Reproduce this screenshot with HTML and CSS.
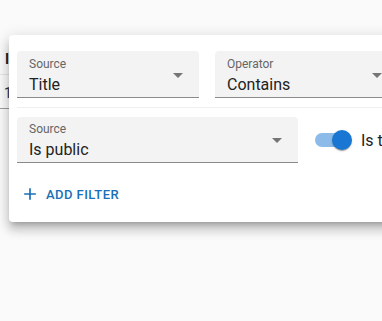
FILE: index.html
```html
<!DOCTYPE html>
<html>
<head>
<meta charset="utf-8">
<link rel="stylesheet" href="styles.css">
</head>
<body>
<div class="page">
  <div class="table">
    <div class="trow head"><span class="cell">Id</span></div>
    <div class="trow"><span class="cell">1</span></div>
  </div>

  <div class="popover">
    <div class="frow">
      <div class="field w1">
        <div class="label">Source</div>
        <div class="value">Title</div>
        <svg class="arrow" viewBox="0 0 24 24" width="24" height="24"><path d="M7 10l5 5 5-5z"/></svg>
      </div>
      <div class="field w2">
        <div class="label">Operator</div>
        <div class="value">Contains</div>
        <svg class="arrow" viewBox="0 0 24 24" width="24" height="24"><path d="M7 10l5 5 5-5z"/></svg>
      </div>
    </div>
    <div class="sep"></div>
    <div class="frow row2">
      <div class="field w3">
        <div class="label">Source</div>
        <div class="value">Is public</div>
        <svg class="arrow" viewBox="0 0 24 24" width="24" height="24"><path d="M7 10l5 5 5-5z"/></svg>
      </div>
      <div class="switchwrap">
        <span class="switch"><span class="track"></span><span class="thumb"></span></span>
        <span class="swlabel">Is true</span>
      </div>
    </div>
    <div class="actions">
      <button class="addbtn">
        <svg viewBox="0 0 24 24" width="20" height="20"><path d="M19 13h-6v6h-2v-6H5v-2h6V5h2v6h6v2z"/></svg>
        <span>Add filter</span>
      </button>
    </div>
  </div>
</div>
</body>
</html>
```
FILE: styles.css
```css
html, body {
  margin: 0;
  padding: 0;
  background: #fafafa;
  font-family: Roboto, "Liberation Sans", sans-serif;
  overflow: hidden;
}
.page {
  position: relative;
  width: 382px;
  height: 321px;
  padding-top: 41px;
  box-sizing: border-box;
  overflow: hidden;
}
.table {
  display: flex;
  flex-direction: column;
}
.trow {
  height: 34px;
  border-bottom: 1px solid #e0e0e0;
  display: flex;
  align-items: center;
  padding-left: 4px;
  font-size: 14px;
  color: #333;
}
.trow.head {
  padding-left: 5px;
  font-weight: 700;
  color: #222;
  border-bottom-color: #e6e6e6;
  align-items: flex-start;
  padding-top: 10px;
  box-sizing: border-box;
}
.trow:not(.head) {
  border-bottom-color: #9e9e9e;
  padding-top: 2px;
  box-sizing: border-box;
}
.popover {
  position: absolute;
  left: 9px;
  top: 35px;
  width: 420px;
  height: 187px;
  box-sizing: border-box;
  background: #fff;
  border-radius: 4px;
  padding: 16px 0 0 8px;
  box-shadow: 0 5px 5px -3px rgba(0,0,0,0.2), 0 8px 10px 1px rgba(0,0,0,0.14), 0 3px 14px 2px rgba(0,0,0,0.12);
  display: flex;
  flex-direction: column;
}
.frow {
  display: flex;
  gap: 16px;
  align-items: center;
}
.field {
  position: relative;
  background: #f3f3f3;
  border-radius: 4px 4px 0 0;
  border-bottom: 1px solid #8a8a8a;
  padding-left: 12px;
  box-sizing: border-box;
  height: 47px;
  flex-shrink: 0;
}
.w1 { width: 182px; }
.w2 { width: 183px; }
.w3 { width: 281px; height: 46px; }
.label {
  font-size: 12px;
  color: #666;
  margin-top: 6px;
  line-height: 14px;
}
.value {
  font-size: 16px;
  color: #222;
  line-height: 20px;
  margin-top: 4px;
}
.w3 .label { margin-top: 5px; }
.w3 .value { margin-top: 4px; }
.arrow {
  position: absolute;
  right: 9px;
  top: 12px;
  fill: #757575;
}
.w3 .arrow { top: 11px; }
.sep {
  height: 1px;
  background: #efefef;
  margin: 9px 0 9px 0;
}
.switchwrap {
  display: flex;
  align-items: center;
  margin-left: 1px;
  white-space: nowrap;
}
.switch {
  position: relative;
  width: 37px;
  height: 20px;
  display: inline-block;
  flex-shrink: 0;
}
.track {
  position: absolute;
  left: 0;
  top: 3px;
  width: 34px;
  height: 14px;
  border-radius: 7px;
  background: #8cbbe9;
}
.thumb {
  position: absolute;
  left: 17px;
  top: 0;
  width: 20px;
  height: 20px;
  border-radius: 50%;
  background: #1976d2;
  box-shadow: 0 2px 1px -1px rgba(0,0,0,0.2), 0 1px 1px 0 rgba(0,0,0,0.14), 0 1px 3px 0 rgba(0,0,0,0.12);
}
.swlabel {
  font-size: 16px;
  color: #222;
  margin-left: 9px;
}
.actions {
  display: flex;
  margin-top: 13px;
}
.addbtn {
  display: flex;
  align-items: center;
  gap: 6px;
  height: 36px;
  padding: 0 3px;
  background: none;
  border: none;
  color: #1a6fb8;
  font-family: Roboto, "Liberation Sans", sans-serif;
  font-size: 13px;
  font-weight: 500;
  letter-spacing: 0.45px;
  text-transform: uppercase;
}
.addbtn svg {
  fill: #1a6fb8;
}
```
